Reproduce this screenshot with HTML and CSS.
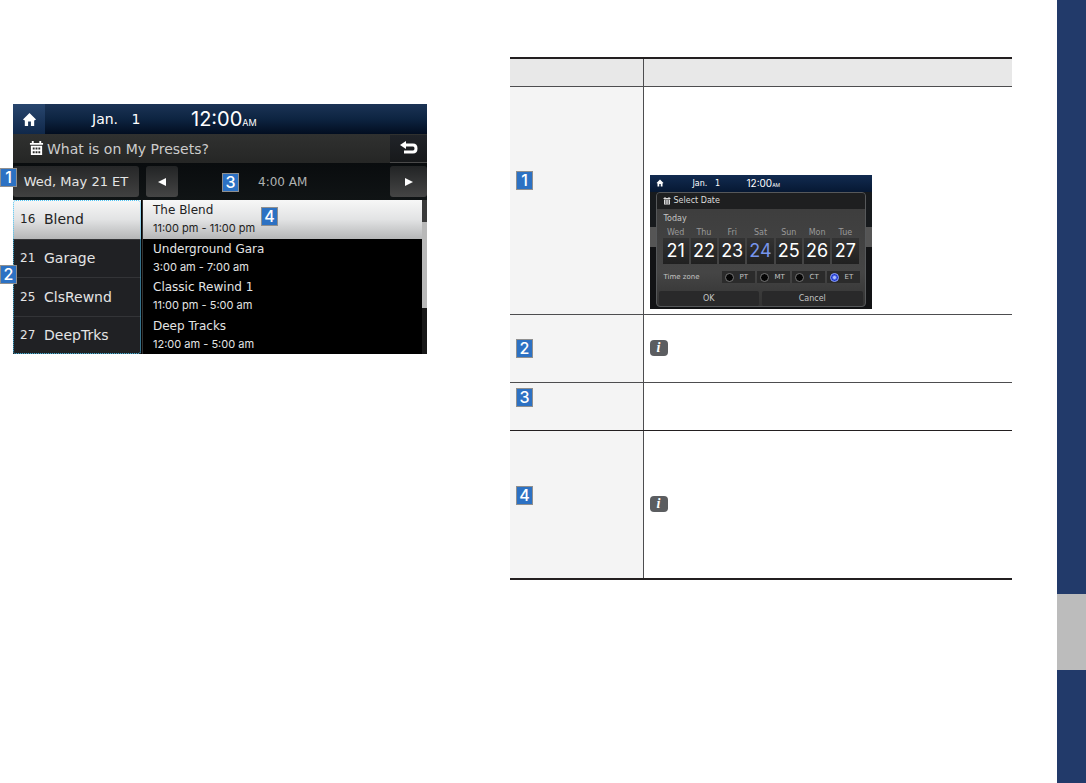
FILE: index.html
```html
<!DOCTYPE html>
<html lang="en">
<head>
    <meta charset="UTF-8">
    <meta name="viewport" content="width=device-width, initial-scale=1.0">
    <title>My Presets Schedule</title>
    <link rel="stylesheet" href="styles.css">
</head>
<body>

    <svg class="sprite" aria-hidden="true">
        <symbol id="home" viewBox="0 0 16 16">
            <path d="M8 1 L15 8 L13 9 V15 H9.500 V10 H6.500 V15 H3 V9 L1 8 Z"/>
        </symbol>
        <symbol id="calendar" viewBox="0 0 16 16">
            <path fill-rule="evenodd" d="M1 2 H3 V0 H5 V2 H11 V0 H13 V2 H15 V4 H1 Z M2 5 H14 V15 H2 Z M4 7 V9 H6 V7 Z M7 7 V9 H9 V7 Z M10 7 V9 H12 V7 Z M4 11 V13 H6 V11 Z M7 11 V13 H9 V11 Z M10 11 V13 H12 V11 Z"/>
        </symbol>
    </svg>

    <div class="page">
        <main class="content">

            <!-- Schedule screen -->
            <section class="screen">
                <div class="status-bar">
                    <button type="button" class="home-btn" aria-label="Home"><svg><use href="#home"/></svg></button>
                    <span class="date">Jan. &nbsp; 1</span>
                    <span class="time">12:00<small>AM</small></span>
                </div>
                <div class="title-bar">
                    <svg class="calendar-icon"><use href="#calendar"/></svg>
                    <h2>What is on My Presets?</h2>
                    <button type="button" class="back-btn" aria-label="Back">
                        <svg viewBox="0 0 18 14"><path class="arrow-head" d="M0 4 L6 0 V8 Z"/><path class="arrow-line" d="M4 4 H13 Q16 4 16 7.500 Q16 11 13 11 H4"/></svg>
                    </button>
                </div>
                <div class="time-bar">
                    <span class="badge badge-date">1</span>
                    <button type="button" class="date-btn">Wed, May 21 ET</button>
                    <button type="button" class="step-btn" aria-label="Earlier"><svg viewBox="0 0 8 8"><path d="M8 0 V8 L0 4 Z"/></svg></button>
                    <span class="current-time">4:00 AM<span class="badge badge-time">3</span></span>
                    <button type="button" class="step-btn later" aria-label="Later"><svg viewBox="0 0 8 8"><path d="M0 0 V8 L8 4 Z"/></svg></button>
                </div>
                <div class="lists">
                    <div class="presets">
                        <span class="badge badge-presets">2</span>
                        <button type="button" class="preset active"><span>16</span>Blend</button>
                        <button type="button" class="preset"><span>21</span>Garage</button>
                        <button type="button" class="preset"><span>25</span>ClsRewnd</button>
                        <button type="button" class="preset"><span>27</span>DeepTrks</button>
                    </div>
                    <div class="programs">
                        <span class="badge badge-programs">4</span>
                        <button type="button" class="program active">The Blend<small>11:00 pm - 11:00 pm</small></button>
                        <button type="button" class="program">Underground Gara<small>3:00 am - 7:00 am</small></button>
                        <button type="button" class="program">Classic Rewind 1<small>11:00 pm - 5:00 am</small></button>
                        <button type="button" class="program">Deep Tracks<small>12:00 am - 5:00 am</small></button>
                    </div>
                    <div class="scrollbar"></div>
                </div>
            </section>

            <!-- Feature table -->
            <table class="features">
                <thead>
                    <tr><th scope="col"></th><th scope="col"></th></tr>
                </thead>
                <tbody>
                    <tr class="row-date">
                        <th scope="row"><span class="badge">1</span></th>
                        <td>
                            <div class="mini-screen">
                                <div class="mini-status">
                                    <svg><use href="#home"/></svg>
                                    <span class="mini-date">Jan. &nbsp; 1</span>
                                    <span class="mini-time">12:00<small>AM</small></span>
                                </div>
                                <form class="dialog">
                                    <h3><svg><use href="#calendar"/></svg>Select Date</h3>
                                    <p class="today">Today</p>
                                    <div class="days">
                                        <button type="button" class="day"><span>Wed</span><b>21</b></button>
                                        <button type="button" class="day"><span>Thu</span><b>22</b></button>
                                        <button type="button" class="day"><span>Fri</span><b>23</b></button>
                                        <button type="button" class="day selected"><span>Sat</span><b>24</b></button>
                                        <button type="button" class="day"><span>Sun</span><b>25</b></button>
                                        <button type="button" class="day"><span>Mon</span><b>26</b></button>
                                        <button type="button" class="day"><span>Tue</span><b>27</b></button>
                                    </div>
                                    <div class="zones">
                                        <span class="zone-title">Time zone</span>
                                        <label><input type="radio" name="zone">PT</label>
                                        <label><input type="radio" name="zone">MT</label>
                                        <label><input type="radio" name="zone">CT</label>
                                        <label><input type="radio" name="zone" checked>ET</label>
                                    </div>
                                    <div class="actions">
                                        <button type="button">OK</button>
                                        <button type="button">Cancel</button>
                                    </div>
                                </form>
                            </div>
                        </td>
                    </tr>
                    <tr class="row-presets">
                        <th scope="row"><span class="badge">2</span></th>
                        <td><span class="info">i</span></td>
                    </tr>
                    <tr class="row-time">
                        <th scope="row"><span class="badge">3</span></th>
                        <td></td>
                    </tr>
                    <tr class="row-programs">
                        <th scope="row"><span class="badge">4</span></th>
                        <td><span class="info">i</span></td>
                    </tr>
                </tbody>
            </table>
        </main>

        <!-- Chapter stripe -->
        <aside class="stripe">
            <div class="stripe-tab"></div>
        </aside>
    </div>

</body>
</html>
```
FILE: styles.css
```css
* {
    box-sizing: border-box;
}

body {
    font-family: "DejaVu Sans", sans-serif;
    margin: 0;
    background: #fff;
}

button {
    font-family: inherit;
    color: inherit;
    border: none;
    padding: 0;
    margin: 0;
    background: none;
    cursor: pointer;
}

h2, h3, p {
    margin: 0;
    font-weight: normal;
}

svg {
    display: block;
    fill: currentColor;
}

.sprite {
    display: none;
}

/* Page */
.page {
    display: flex;
    min-height: 100vh;
}

.content {
    flex: 1;
    display: grid;
    grid-template-columns: 414fr 502fr;
    align-items: start;
    gap: 83px;
    padding: 57px 45px 0 13px;
}

.stripe {
    width: 29px;
    display: grid;
    grid-template-rows: 594fr 76fr 113fr;
    background: #223a6a;
}

.stripe-tab {
    grid-row: 2;
    background: #bcbcbc;
}

/* Number Badges */
.badge {
    display: block;
    width: 17px;
    height: 19px;
    border: 1px solid #8f8f8f;
    background: #2c71c3;
    color: #fff;
    font: 500 16px/17px Inter, sans-serif;
    text-align: center;
}

.screen .badge {
    position: absolute;
    z-index: 1;
}

.badge-date {
    left: -13px;
    top: 5px;
}

.badge-time {
    left: 44px;
    top: -2px;
}

.badge-presets {
    left: -13px;
    top: 65px;
}

.badge-programs {
    left: 118px;
    top: 7px;
}

/* Schedule Screen */
.screen {
    margin-top: 47px;
    background: #000;
    color: #e4e4e4;
}

.status-bar {
    display: flex;
    align-items: center;
    height: 30px;
    background: linear-gradient(#1b3355, #0d2441 50%, #020d20);
    color: #fff;
}

.home-btn {
    width: 32px;
    height: 30px;
    background: linear-gradient(#28466e, #10284a);
}

.home-btn svg {
    width: 15px;
    height: 15px;
    margin: 0 auto;
}

.date {
    width: 99px;
    padding-left: 47px;
    box-sizing: content-box;
    font-size: 14px;
    white-space: nowrap;
}

.time {
    font: 20px Inter, sans-serif;
}

.time small {
    font-size: 9px;
}

.title-bar {
    display: flex;
    align-items: center;
    height: 29px;
    padding-left: 16px;
    background: linear-gradient(#303130, #252625);
    color: #ccc;
}

.calendar-icon {
    width: 15px;
    height: 15px;
    margin-right: 3px;
    color: #fff;
}

.title-bar h2 {
    flex: 1;
    font-size: 14px;
}

.back-btn {
    width: 37px;
    height: 28px;
    background: linear-gradient(#202328, #17191b);
    border-bottom: 1px solid #4a4a4a;
    color: #fff;
}

.back-btn svg {
    width: 18px;
    height: 14px;
    margin: 0 auto;
}

.arrow-line {
    fill: none;
    stroke: currentColor;
    stroke-width: 3;
}

.time-bar {
    position: relative;
    display: flex;
    align-items: center;
    height: 37px;
    background: linear-gradient(#090c0e, #101415);
}

.date-btn {
    width: 126px;
    height: 31px;
    border-radius: 3px;
    background: linear-gradient(#262728, #414141);
    font-size: 13px;
}

.step-btn {
    width: 32px;
    height: 31px;
    border-radius: 3px;
    background: linear-gradient(#222425, #454545);
    color: #fff;
}

.date-btn + .step-btn {
    margin-left: 7px;
}

.step-btn.later {
    width: 37px;
}

.step-btn svg {
    width: 8px;
    height: 8px;
    margin: 0 auto;
}

.current-time {
    position: relative;
    flex: 1;
    padding-left: 80px;
    color: #b0b3b3;
    font-size: 12px;
}

.lists {
    display: flex;
    height: 154px;
}

.presets, .programs {
    position: relative;
    display: grid;
    grid-template-rows: repeat(4, 1fr);
}

.presets {
    width: 128px;
    background: #202124;
}

/* Dotted frame round the preset list */
.presets::after {
    content: "";
    position: absolute;
    inset: 0;
    border: 1px dotted #4cc4f4;
    border-radius: 3px;
    pointer-events: none;
}

.preset {
    display: flex;
    align-items: center;
    padding-left: 7px;
    border-top: 1px solid #333437;
    font-size: 14px;
}

.preset span {
    width: 24px;
    font-size: 12px;
    text-align: left;
}

.programs {
    flex: 1;
    margin-left: 1px;
    border-left: 1px solid #333;
}

.program {
    padding-left: 10px;
    text-align: left;
    font-size: 12px;
    line-height: 18px;
}

.program small {
    display: block;
    font: 11px/18px Inter, sans-serif;
}

.preset.active, .program.active {
    border-top: none;
    background: linear-gradient(#f7f7f7, #e2e3e4 50%, #b5b6b7);
    color: #222;
}

.scrollbar {
    width: 5px;
    background: linear-gradient(#3a3a3a 22px, #b8b8b8 22px 108px, #171717 108px);
}

/* Feature Table */
.features {
    width: 100%;
    border-collapse: collapse;
    table-layout: fixed;
    border-top: 2px solid #231f20;
    border-bottom: 2px solid #231f20;
}

.features th, .features td {
    padding: 0 6px;
    border-bottom: 1px solid #4d4d4f;
}

.features th:first-child {
    width: 133px;
    border-right: 1px solid #4d4d4f;
}

.features thead th {
    height: 28px;
    background: #e8e8e8;
}

.features tbody th {
    background: #f4f4f4;
}

.features .row-date th {
    padding-top: 84px;
    vertical-align: top;
}

.features .row-date td {
    height: 228px;
    padding-bottom: 5px;
    vertical-align: bottom;
}

.row-presets td {
    height: 68px;
}

.features .row-time th {
    height: 48px;
    padding-top: 5px;
    vertical-align: top;
}

.features .row-time > * {
    border-bottom-color: #231f20;
}

.features .row-programs > * {
    border-bottom: 2px solid #231f20;
}

.features .row-programs th {
    height: 149px;
    padding-bottom: 18px;
}

.info {
    display: block;
    width: 18px;
    height: 16px;
    border-radius: 4px;
    background: #5b5d60;
    color: #fff;
    font: italic bold 14px/16px "Liberation Serif", serif;
    text-align: center;
}

/* Select Date Screen */
.mini-screen {
    width: 222px;
    height: 134px;
    padding: 0 6px;
    background: linear-gradient(#122b50, #061833 17px, #171a1d 17px 52px, #555 52px 72px, #121315 72px);
    color: #c4c4c4;
    font-size: 8px;
}

.mini-status {
    display: flex;
    align-items: center;
    height: 17px;
    color: #fff;
}

.mini-status svg {
    width: 8px;
    height: 8px;
}

.mini-date {
    width: 54px;
    margin-left: 29px;
}

.mini-time {
    font: 10px Inter, sans-serif;
}

.mini-time small {
    font-size: 5px;
}

.dialog {
    height: 115px;
    border: 1px solid #56585a;
    border-radius: 4px;
    background: linear-gradient(#3c3c3c, #454545 70%, #333);
    overflow: hidden;
}

.dialog h3 {
    display: flex;
    align-items: center;
    gap: 3px;
    height: 16px;
    padding-left: 6px;
    background: #1e1f20;
    color: #ddd;
    font-size: 8px;
}

.dialog h3 svg {
    width: 8px;
    height: 8px;
}

.today {
    padding: 4px 7px 0;
    line-height: 12px;
}

.days {
    display: grid;
    grid-template-columns: repeat(7, 1fr);
    gap: 2px;
    padding: 3px 6px 0;
}

.day span, .day b {
    display: block;
}

.day span {
    color: #999;
    font-size: 8px;
    line-height: 10px;
}

.day b {
    height: 26px;
    background: linear-gradient(#333, #202020);
    color: #fff;
    font: 18px/25px Inter, sans-serif;
}

.day.selected b {
    color: #7795ea;
}

.zones {
    display: flex;
    align-items: center;
    gap: 2px;
    height: 27px;
    padding-left: 7px;
    font-size: 7px;
}

.zone-title {
    flex: 1;
    white-space: nowrap;
}

.zones label {
    display: flex;
    align-items: center;
    gap: 6px;
    width: 33px;
    height: 12px;
    padding-left: 3px;
    background: #2b2b2b;
}

.zones label:last-child {
    margin-right: 5px;
}

.zones input {
    appearance: none;
    width: 9px;
    height: 9px;
    margin: 0;
    border: 1px solid #777;
    border-radius: 50%;
    background: #050505;
}

.zones input:checked {
    border-color: #93a6f5;
    background: radial-gradient(#a9bcff 20%, #1c36d0 55%);
}

.actions {
    display: grid;
    grid-template-columns: 1fr 1fr;
    gap: 3px;
    padding: 0 2px;
}

.actions button {
    height: 15px;
    border-radius: 2px;
    background: #29292a;
    font-size: 8px;
}
```
